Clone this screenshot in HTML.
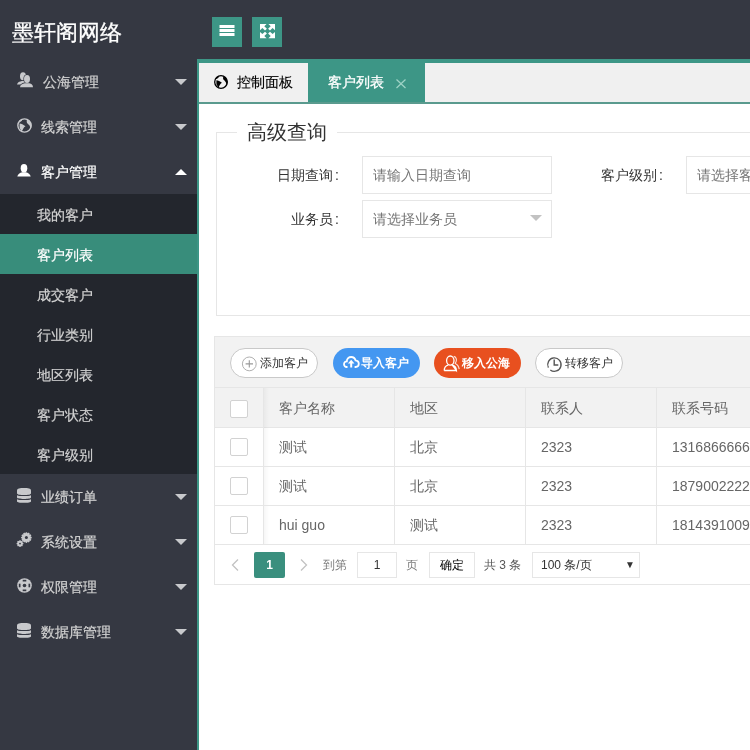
<!DOCTYPE html>
<html><head><meta charset="utf-8">
<style>
*{margin:0;padding:0;box-sizing:border-box}
html,body{width:750px;height:750px;overflow:hidden;background:#fff;font-family:"Liberation Sans",sans-serif;font-size:14px;color:#333}
.abs{position:absolute}
svg{position:absolute;display:block;overflow:visible}
.header{position:absolute;left:0;top:0;width:750px;height:59px;background:#353842}
.logo{position:absolute;left:12px;top:17px;color:#fff;font-size:22px;line-height:32px;white-space:nowrap;-webkit-text-stroke:0.3px #fff}
.hbtn{position:absolute;top:17px;width:30px;height:30px;background:#3d9686}
.side{position:absolute;left:0;top:59px;width:197px;height:691px;background:#353842}
.border-l{position:absolute;left:197px;top:59px;width:2px;height:691px;background:#3d9686}
.nav{position:absolute;left:0;width:197px;height:45px;color:#d2d2d2;font-size:14px;-webkit-text-stroke:0.2px currentColor}
.nav .t{position:absolute;left:41px;top:1px;line-height:45px;white-space:nowrap}
.nav .arr{position:absolute;left:175px;top:20px;width:0;height:0;border-left:6px solid transparent;border-right:6px solid transparent;border-top:6px solid #c8c9cc}
.nav .arr.up{border-top:none;border-bottom:6px solid #fff}
.sub{position:absolute;left:0;top:194px;width:197px;height:280px;background:#23262d}
.si{position:absolute;left:0;width:197px;height:40px;line-height:40px;padding-left:37px;padding-top:1px;color:#d2d2d2;font-size:14px;-webkit-text-stroke:0.2px currentColor}
.si.on{background:#388d7b;color:#fff}
.tabs{position:absolute;left:199px;top:59px;width:551px;height:45px;background:#f0f0f0;border-top:4px solid #3d9686;border-bottom:2px solid #5a9a8e}
.tab{position:absolute;top:0;height:39px;line-height:39px;font-size:14px;color:#000;white-space:nowrap;-webkit-text-stroke:0.15px currentColor}
.tab.on{background:#3d9686;color:#fff;-webkit-text-stroke:0.3px #fff}
.fs{position:absolute;left:216px;top:132px;width:600px;height:184px;border:1px solid #e6e6e6}
.legend{position:absolute;left:237px;top:118px;padding:0 10px;background:#fff;font-size:20px;line-height:28px;color:#333;white-space:nowrap}
.lbl{position:absolute;font-size:14px;color:#333;white-space:nowrap;line-height:38px}
.lbl b{font-weight:normal;font-family:"Liberation Sans",sans-serif;margin-left:2px}
.inp{position:absolute;width:190px;height:38px;border:1px solid #e6e6e6;background:#fff;color:#757575;font-size:14px;line-height:36px;padding-left:10px;white-space:nowrap;overflow:hidden}
.tb{position:absolute;left:214px;top:336px;width:600px;height:249px;border:1px solid #e6e6e6}
.toolbar{position:absolute;left:215px;top:337px;width:600px;height:51px;background:#f2f2f2;border-bottom:1px solid #e6e6e6}
.btn{position:absolute;top:348px;height:30px;border-radius:15px;font-size:12px;line-height:28px;white-space:nowrap}
.btn.o{border:1px solid #c9c9c9;background:#fff;color:#333}
.btn.b{background:#4497f1;color:#fff;font-weight:bold;line-height:30px}
.btn.r{background:#e8501f;color:#fff;font-weight:bold;line-height:30px}
.thead{position:absolute;left:215px;top:388px;width:600px;height:40px;background:#f2f2f2;border-bottom:1px solid #e6e6e6}
.vl{position:absolute;width:1px;background:#e6e6e6}
.hl{position:absolute;height:1px;background:#e6e6e6}
.cell{position:absolute;font-size:14px;color:#666;white-space:nowrap;line-height:38px}
.cb{position:absolute;left:230px;width:18px;height:18px;border:1px solid #d2d2d2;background:#fff;border-radius:2px}
.pg{position:absolute;font-size:12px;color:#7a7a7a;white-space:nowrap;line-height:26px}
</style></head><body>
<div id="root" style="will-change:transform;position:absolute;left:0;top:0;width:750px;height:750px;overflow:hidden">
<div class="header">
  <div class="logo">墨轩阁网络</div>
  <div class="hbtn" style="left:212px"></div>
  <div class="hbtn" style="left:252px"></div>
</div>
<!-- hamburger -->
<svg style="left:219px;top:25px" width="16" height="11" viewBox="0 0 16 11"><rect x="0.5" y="0" width="15" height="3" fill="#fff"/><rect x="0.5" y="4" width="15" height="3" fill="#fff"/><rect x="0.5" y="8" width="15" height="3" fill="#fff"/></svg>
<!-- expand -->
<svg style="left:259.5px;top:23.8px" width="15" height="14.2" viewBox="0 0 15 15" preserveAspectRatio="none" fill="#fff">
<polygon points="0,0 6.6,0 4.3,2.4 6.9,5 5,6.9 2.4,4.3 0,6.6"/>
<polygon points="15,0 8.4,0 10.7,2.4 8.1,5 10,6.9 12.6,4.3 15,6.6"/>
<polygon points="0,15 6.6,15 4.3,12.6 6.9,10 5,8.1 2.4,10.7 0,8.4"/>
<polygon points="15,15 8.4,15 10.7,12.6 8.1,10 10,8.1 12.6,10.7 15,8.4"/>
</svg>
<div class="side"></div>
<div class="border-l"></div>
<div class="nav" style="top:59px"><span class="t" style="left:43px">公海管理</span><i class="arr"></i></div>
<div class="nav" style="top:104px"><span class="t">线索管理</span><i class="arr"></i></div>
<div class="nav" style="top:149px;color:#fff"><span class="t">客户管理</span><i class="arr up"></i></div>
<div class="sub">
  <div class="si" style="top:0">我的客户</div>
  <div class="si on" style="top:40px">客户列表</div>
  <div class="si" style="top:80px">成交客户</div>
  <div class="si" style="top:120px">行业类别</div>
  <div class="si" style="top:160px">地区列表</div>
  <div class="si" style="top:200px">客户状态</div>
  <div class="si" style="top:240px">客户级别</div>
</div>
<div class="nav" style="top:474px"><span class="t">业绩订单</span><i class="arr"></i></div>
<div class="nav" style="top:519px"><span class="t">系统设置</span><i class="arr"></i></div>
<div class="nav" style="top:564px"><span class="t">权限管理</span><i class="arr"></i></div>
<div class="nav" style="top:609px"><span class="t">数据库管理</span><i class="arr"></i></div>

<!-- sidebar icons -->
<svg style="left:16px;top:71px" width="18" height="17" viewBox="0 0 18 17">
 <ellipse cx="7" cy="5.3" rx="3" ry="4" fill="#c8c9cc"/>
 <path d="M1,13.6 C1.3,11.5 3.5,10.3 6,10 L9,10 L9,13.6 Z" fill="#c8c9cc"/>
 <ellipse cx="11" cy="8" rx="3.6" ry="4.4" fill="#353842"/>
 <path d="M3.3,16.6 C3.6,13.6 6,12.2 8.5,11.6 L13.5,11.6 C16,12.2 17.2,13.8 17.5,16.6 Z" fill="#353842"/>
 <ellipse cx="11" cy="8" rx="3" ry="3.9" fill="#c8c9cc"/>
 <path d="M4,16.2 C4.3,13.8 6.3,12.6 8.8,12.3 L13.2,12.3 C15.7,12.6 16.7,13.8 17,16.2 Z" fill="#c8c9cc"/>
</svg>
<svg style="left:16.5px;top:117.5px" width="15" height="15" viewBox="0 0 14 14">
 <circle cx="7" cy="7" r="6.2" fill="none" stroke="#c8c9cc" stroke-width="1.3"/>
 <path d="M9.3,1.2 C11.5,2 13.2,3.8 13.5,6.5 C13.6,8 13.2,9.5 12.5,10.8 C12.4,9.2 12.2,8 11.8,7.2 C11.3,6.3 10.2,5.5 9.4,4.6 C9,3.8 9,2.5 9.3,1.2 Z" fill="#c8c9cc"/>
 <path d="M2.4,5.2 C4,5.4 6,6.2 7.9,7.8 C6.9,8.4 6.3,9.1 5.8,10 C5.3,11 4.9,12 4.3,12.9 C3.9,11.8 3.5,10.8 3.0,10.3 C2.6,9.8 2.4,9.2 2.4,8.4 Z" fill="#c8c9cc"/>
 <path d="M1.2,4.2 C1.9,2.7 3.3,1.4 5.0,0.9 C4.9,2.0 4.3,3.0 3.2,3.6 C2.6,3.9 1.9,4.2 1.2,4.2 Z" fill="#c8c9cc"/>
</svg>
<svg style="left:17px;top:163.5px" width="14" height="13" viewBox="0 0 14 13">
 <ellipse cx="7" cy="4.2" rx="3.3" ry="4.2" fill="#fff"/>
 <path d="M0.3,12.6 C0.8,10.2 2.8,8.7 5.2,8.3 L8.8,8.3 C11.2,8.7 13.2,10.2 13.7,12.6 Z" fill="#fff"/>
</svg>
<svg style="left:17px;top:487.5px" width="14" height="15" viewBox="0 0 14 15" fill="#c8c9cc">
 <path d="M0,2.5 C0,0.5 3,0 7,0 C11,0 14,0.5 14,2.5 L14,5.2 C14,6.5 11,7 7,7 C3,7 0,6.5 0,5.2 Z"/>
 <path d="M0,7.3 C1.5,7.9 4,8.1 7,8.1 C10,8.1 12.5,7.9 14,7.3 L14,9.6 C14,10.6 11,11 7,11 C3,11 0,10.6 0,9.6 Z"/>
 <path d="M0,11.3 C1.5,11.9 4,12.1 7,12.1 C10,12.1 12.5,11.9 14,11.3 L14,13.2 C14,14.4 11,14.8 7,14.8 C3,14.8 0,14.4 0,13.2 Z"/>
</svg>
<svg style="left:16px;top:531px" width="17" height="17" viewBox="0 0 17 17">
 <g fill="#c8c9cc">
 <circle cx="10.4" cy="6.6" r="4.5"/>
 <g transform="translate(10.4 6.6)"><rect x="-0.8" y="-5.3" width="1.6" height="10.6"/><rect x="-0.8" y="-5.3" width="1.6" height="10.6" transform="rotate(30)"/><rect x="-0.8" y="-5.3" width="1.6" height="10.6" transform="rotate(60)"/><rect x="-0.8" y="-5.3" width="1.6" height="10.6" transform="rotate(90)"/><rect x="-0.8" y="-5.3" width="1.6" height="10.6" transform="rotate(120)"/><rect x="-0.8" y="-5.3" width="1.6" height="10.6" transform="rotate(150)"/></g>
 <circle cx="4" cy="12.6" r="2.8"/>
 <g transform="translate(4 12.6)"><rect x="-0.6" y="-3.4" width="1.2" height="6.8"/><rect x="-0.6" y="-3.4" width="1.2" height="6.8" transform="rotate(45)"/><rect x="-0.6" y="-3.4" width="1.2" height="6.8" transform="rotate(90)"/><rect x="-0.6" y="-3.4" width="1.2" height="6.8" transform="rotate(135)"/></g>
 </g>
 <circle cx="10.4" cy="6.6" r="1.5" fill="#353842"/>
 <circle cx="4" cy="12.6" r="0.9" fill="#353842"/>
</svg>
<svg style="left:16.5px;top:577.5px" width="15" height="15" viewBox="0 0 15 15">
 <circle cx="7.5" cy="7.5" r="7.3" fill="#c8c9cc"/>
 <circle cx="7.5" cy="7.5" r="1.8" fill="#353842"/>
 <rect x="5.7" y="1.8" width="3.6" height="1.7" fill="#353842"/>
 <rect x="5.7" y="11.5" width="3.6" height="1.7" fill="#353842"/>
 <rect x="1.8" y="5.7" width="1.7" height="3.6" fill="#353842"/>
 <rect x="11.5" y="5.7" width="1.7" height="3.6" fill="#353842"/>
</svg>
<svg style="left:17px;top:622.5px" width="14" height="15" viewBox="0 0 14 15" fill="#c8c9cc">
 <path d="M0,2.5 C0,0.5 3,0 7,0 C11,0 14,0.5 14,2.5 L14,5.2 C14,6.5 11,7 7,7 C3,7 0,6.5 0,5.2 Z"/>
 <path d="M0,7.3 C1.5,7.9 4,8.1 7,8.1 C10,8.1 12.5,7.9 14,7.3 L14,9.6 C14,10.6 11,11 7,11 C3,11 0,10.6 0,9.6 Z"/>
 <path d="M0,11.3 C1.5,11.9 4,12.1 7,12.1 C10,12.1 12.5,11.9 14,11.3 L14,13.2 C14,14.4 11,14.8 7,14.8 C3,14.8 0,14.4 0,13.2 Z"/>
</svg>

<div class="tabs">
  <div class="tab" style="left:38px">控制面板</div>
  <div class="tab on" style="left:109px;width:117px;padding-left:20px">客户列表</div>
</div>
<svg style="left:396px;top:79px" width="10" height="9.5" viewBox="0 0 10 10" preserveAspectRatio="none"><path d="M0.5,0.5 L9.5,9.5 M9.5,0.5 L0.5,9.5" stroke="#9fd3c6" stroke-width="1.2"/></svg>
<svg style="left:214px;top:75px" width="14" height="14" viewBox="0 0 14 14">
 <circle cx="7" cy="7" r="6.3" fill="none" stroke="#000" stroke-width="1.3"/>
 <path d="M9.3,1.2 C11.5,2 13.2,3.8 13.5,6.5 C13.6,8 13.2,9.5 12.5,10.8 C12.4,9.2 12.2,8 11.8,7.2 C11.3,6.3 10.2,5.5 9.4,4.6 C9,3.8 9,2.5 9.3,1.2 Z" fill="#000"/>
 <path d="M2.4,5.2 C4,5.4 6,6.2 7.9,7.8 C6.9,8.4 6.3,9.1 5.8,10 C5.3,11 4.9,12 4.3,12.9 C3.9,11.8 3.5,10.8 3.0,10.3 C2.6,9.8 2.4,9.2 2.4,8.4 Z" fill="#000"/>
 <path d="M1.2,4.2 C1.9,2.7 3.3,1.4 5.0,0.9 C4.9,2.0 4.3,3.0 3.2,3.6 C2.6,3.9 1.9,4.2 1.2,4.2 Z" fill="#000"/>
</svg>

<div class="fs"></div>
<div class="legend">高级查询</div>
<div class="lbl" style="left:277px;top:156px">日期查询<b>:</b></div>
<div class="inp" style="left:362px;top:156px">请输入日期查询</div>
<div class="lbl" style="left:601px;top:156px">客户级别<b>:</b></div>
<div class="inp" style="left:686px;top:156px">请选择客户级别</div>
<div class="lbl" style="left:291px;top:200px">业务员<b>:</b></div>
<div class="inp" style="left:362px;top:200px">请选择业务员</div>
<div class="abs" style="left:530px;top:215px;width:0;height:0;border-left:6px solid transparent;border-right:6px solid transparent;border-top:6px solid #c2c2c2"></div>

<div class="tb"></div>
<div class="toolbar"></div>
<div class="btn o" style="left:230px;width:88px;padding-left:29px">添加客户</div>
<div class="btn b" style="left:333px;width:87px;padding-left:28px">导入客户</div>
<div class="btn r" style="left:434px;width:87px;padding-left:28px">移入公海</div>
<div class="btn o" style="left:535px;width:88px;padding-left:29px">转移客户</div>
<svg style="left:241.5px;top:357px" width="15" height="15" viewBox="0 0 15 15">
 <circle cx="7.3" cy="6.9" r="6.9" fill="none" stroke="#b0b0b0" stroke-width="1"/>
 <path d="M3.6,6.9 H11 M7.3,3.2 V10.6" stroke="#999" stroke-width="1.1"/>
</svg>
<svg style="left:343px;top:356px" width="17" height="12" viewBox="0 0 17 12">
 <path d="M4.5,11 H3.8 C2,11 1,9.6 1,8.2 C1,6.6 2.2,5.4 3.8,5.4 C3.8,2.8 5.8,1 8.2,1 C10.4,1 12,2.4 12.5,4.4 C14.4,4.6 15.8,6 15.8,7.8 C15.8,9.6 14.4,11 12.6,11 H11.6" fill="none" stroke="#fff" stroke-width="1.8"/>
 <path d="M8.2,3.8 L4.9,7.4 H7.2 V11.6 H9.2 V7.4 H11.5 Z" fill="#fff"/>
</svg>
<svg style="left:443px;top:355px" width="18" height="17" viewBox="0 0 18 17">
 <ellipse cx="7.3" cy="5.6" rx="3.7" ry="4.6" fill="none" stroke="#fff" stroke-width="1.3"/>
 <path d="M1.2,15.5 C1.3,12.3 3.3,10.6 5.2,10.2 M9.4,10.2 C11.3,10.6 13.3,12.3 13.4,15.5 Z M1.2,15.5 H13.4" fill="none" stroke="#fff" stroke-width="1.3"/>
 <path d="M10.8,1.4 C13.6,2 14.4,5.5 12.2,8.6 C14.6,9.6 15.8,11.5 16.2,14.2" fill="none" stroke="#fff" stroke-width="1.1" opacity="0.85"/>
</svg>
<svg style="left:546.5px;top:356.5px" width="15" height="15" viewBox="0 0 15 15">
 <path d="M1.4,10.6 A6.7,6.7 0 1 1 3.3,12.9" fill="none" stroke="#555" stroke-width="1.3"/>
 <path d="M7.2,2.6 V8 H11.3" fill="none" stroke="#555" stroke-width="1.4"/>
</svg>

<div class="thead"></div>
<div class="vl" style="left:263px;top:388px;height:156px"></div>
<div class="abs" style="left:264px;top:388px;width:5px;height:156px;background:linear-gradient(to right,rgba(0,0,0,0.035),rgba(0,0,0,0))"></div>
<div class="vl" style="left:394px;top:388px;height:156px"></div>
<div class="vl" style="left:525px;top:388px;height:156px"></div>
<div class="vl" style="left:656px;top:388px;height:156px"></div>
<div class="hl" style="left:215px;top:466px;width:600px"></div>
<div class="hl" style="left:215px;top:505px;width:600px"></div>
<div class="hl" style="left:215px;top:544px;width:600px"></div>
<div class="cb" style="top:400px"></div>
<div class="cb" style="top:438px"></div>
<div class="cb" style="top:477px"></div>
<div class="cb" style="top:516px"></div>
<div class="cell" style="left:279px;top:389px">客户名称</div>
<div class="cell" style="left:410px;top:389px">地区</div>
<div class="cell" style="left:541px;top:389px">联系人</div>
<div class="cell" style="left:672px;top:389px">联系号码</div>
<div class="cell" style="left:279px;top:428px">测试</div>
<div class="cell" style="left:410px;top:428px">北京</div>
<div class="cell" style="left:541px;top:428px">2323</div>
<div class="cell" style="left:672px;top:428px">13168666666</div>
<div class="cell" style="left:279px;top:467px">测试</div>
<div class="cell" style="left:410px;top:467px">北京</div>
<div class="cell" style="left:541px;top:467px">2323</div>
<div class="cell" style="left:672px;top:467px">18790022222</div>
<div class="cell" style="left:279px;top:506px">hui guo</div>
<div class="cell" style="left:410px;top:506px">测试</div>
<div class="cell" style="left:541px;top:506px">2323</div>
<div class="cell" style="left:672px;top:506px">18143910099</div>

<svg style="left:231px;top:559px" width="8" height="12" viewBox="0 0 8 12"><path d="M7,0.5 L1.5,6 L7,11.5" fill="none" stroke="#c2c2c2" stroke-width="1.3"/></svg>
<div class="abs" style="left:254px;top:552px;width:31px;height:26px;background:#3a8f7e;border-radius:2px;color:#fff;font-weight:bold;font-size:12px;text-align:center;line-height:26px">1</div>
<svg style="left:300px;top:559px" width="8" height="12" viewBox="0 0 8 12"><path d="M1,0.5 L6.5,6 L1,11.5" fill="none" stroke="#c2c2c2" stroke-width="1.3"/></svg>
<div class="pg" style="left:323px;top:552px">到第</div>
<div class="abs" style="left:357px;top:552px;width:40px;height:26px;border:1px solid #e6e6e6;font-size:12px;text-align:center;line-height:24px;color:#333">1</div>
<div class="pg" style="left:406px;top:552px">页</div>
<div class="abs" style="left:429px;top:552px;width:46px;height:26px;border:1px solid #e6e6e6;font-size:12px;text-align:center;line-height:24px;color:#000">确定</div>
<div class="pg" style="left:484px;top:552px;color:#555">共 3 条</div>
<div class="abs" style="left:532px;top:552px;width:108px;height:26px;border:1px solid #e6e6e6;font-size:12px;line-height:24px;color:#333;padding-left:8px;white-space:nowrap">100 条/页<span style="position:absolute;left:92px;top:0;font-size:10px">▼</span></div>
</div>
</body></html>
